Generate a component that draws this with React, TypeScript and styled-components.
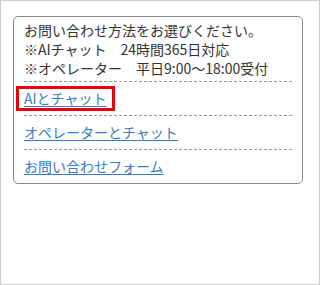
import styled, { createGlobalStyle } from 'styled-components';

const GlobalStyle = createGlobalStyle`
	html, body {
		margin: 0;
		padding: 0;
		background: #fff;
	}
	body {
		font-family: "Noto Sans CJK JP", "Noto Sans", sans-serif;
		color: #333;
	}
`;

const Frame = styled.div`
	box-sizing: border-box;
	width: 320px;
	height: 285px;
	border: 1px solid #ccc;
	padding: 15px 0 0 12px;
`;

const Panel = styled.div`
	box-sizing: border-box;
	width: 290px;
	border: 1px solid #888;
	border-radius: 5px;
	padding: 4px 10px 0;
`;

const Notice = styled.div`
	font-size: 14px;
	line-height: 19px;
	padding-bottom: 3px;
	border-bottom: 1px dashed #999;
`;

const Row = styled.div<{ $last?: boolean }>`
	height: 33px;
	display: flex;
	align-items: center;
	border-bottom: ${(p) => (p.$last ? 'none' : '1px dashed #999')};
`;

const Link = styled.a<{ $focused?: boolean }>`
	display: inline-block;
	font-size: 14px;
	line-height: 17px;
	color: #3b7bbf;
	text-decoration: underline;
	text-underline-offset: 2px;
	padding: 1px 0;
	cursor: pointer;
	${(p) =>
		p.$focused &&
		`
		border: 3px solid #e8000b;
		padding: 1px 6px 1px 5px;
		margin: -1px 0 0 -8px;
	`}
`;

const links = [
	{ label: 'AIとチャット', focused: true },
	{ label: 'オペレーターとチャット' },
	{ label: 'お問い合わせフォーム' },
];

const App = () => {
	return (
		<>
			<GlobalStyle />
			<Frame>
				<Panel>
					<Notice>
						お問い合わせ方法をお選びください。
						<br />
						※AIチャット　24時間365日対応
						<br />
						※オペレーター　平日9:00～18:00受付
					</Notice>
					{links.map((link, i) => (
						<Row key={link.label} $last={i === links.length - 1}>
							<Link $focused={link.focused}>{link.label}</Link>
						</Row>
					))}
				</Panel>
			</Frame>
		</>
	);
};

export default App;
